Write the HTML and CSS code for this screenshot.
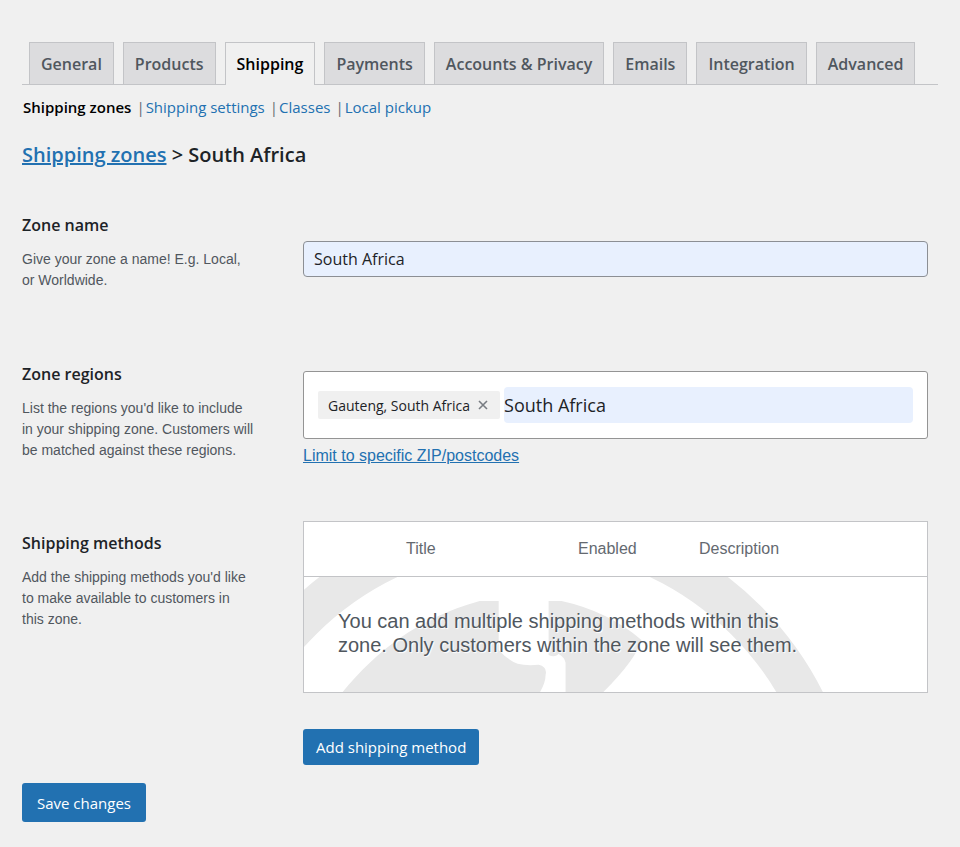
FILE: index.html
```html
<!DOCTYPE html>
<html lang="en">
<head>
    <meta charset="UTF-8">
    <title>Shipping zones - South Africa</title>
    <link rel="stylesheet" href="styles.css">
</head>
<body>
    <div class="wrap">
        <nav class="nav-tabs">
            <a href="#" class="nav-tab">General</a>
            <a href="#" class="nav-tab">Products</a>
            <a href="#" class="nav-tab active">Shipping</a>
            <a href="#" class="nav-tab">Payments</a>
            <a href="#" class="nav-tab">Accounts &amp; Privacy</a>
            <a href="#" class="nav-tab">Emails</a>
            <a href="#" class="nav-tab">Integration</a>
            <a href="#" class="nav-tab">Advanced</a>
        </nav>

        <ul class="subnav">
            <li><a href="#" class="current">Shipping zones</a></li>
            <li><a href="#">Shipping settings</a></li>
            <li><a href="#">Classes</a></li>
            <li><a href="#">Local pickup</a></li>
        </ul>

        <h2><a href="#">Shipping zones</a> &gt; South Africa</h2>

        <form onsubmit="return false">
            <!-- Zone name -->
            <div class="row row-name">
                <div class="row-label">
                    <label for="zoneName">Zone name</label>
                    <p>Give your zone a name! E.g. Local, or Worldwide.</p>
                </div>
                <div class="row-field">
                    <input type="text" id="zoneName" class="zone-name" value="South Africa">
                </div>
            </div>

            <!-- Zone regions -->
            <div class="row row-regions">
                <div class="row-label">
                    <label for="zoneRegions">Zone regions</label>
                    <p>List the regions you'd like to include in your shipping zone. Customers will be matched against these regions.</p>
                </div>
                <div class="row-field">
                    <div class="token-box">
                        <span class="token">
                            Gauteng, South Africa
                            <button type="button" class="token-remove" aria-label="Remove">
                                <svg width="10" height="10" viewBox="0 0 10 10"><path d="M1 1l8 8M9 1l-8 8" stroke="#787c82" stroke-width="1.6" fill="none"/></svg>
                            </button>
                        </span>
                        <input type="text" id="zoneRegions" class="token-input" value="South Africa">
                    </div>
                    <a href="#" class="postcodes">Limit to specific ZIP/postcodes</a>
                </div>
            </div>

            <!-- Shipping methods -->
            <div class="row row-methods">
                <div class="row-label">
                    <h3>Shipping methods</h3>
                    <p>Add the shipping methods you'd like to make available to customers in this zone.</p>
                </div>
                <div class="row-field">
                    <table class="methods">
                        <thead>
                            <tr>
                                <th class="col-sort"></th>
                                <th class="col-title">Title</th>
                                <th class="col-enabled">Enabled</th>
                                <th>Description</th>
                            </tr>
                        </thead>
                        <tbody>
                            <tr>
                                <td colspan="4" class="blank">
                                    <svg class="globe" viewBox="0 0 624 116" preserveAspectRatio="xMinYMin slice" aria-hidden="true">
                                        <circle cx="220" cy="266" r="315" fill="none" stroke="#e8e8e8" stroke-width="41"/>
                                        <path fill="#e8e8e8" d="M38 116C72 75 112 42 176 24H195V73Q204 83 214 87Q222 89 235 88Q244 90 242 98Q242 106 236 116Z"/>
                                        <path fill="#e8e8e8" d="M245 24H258Q304 34 338 63Q333 82 299 116H262V86Q261 80 255 77Q251 81 245 78Z"/>
                                    </svg>
                                    <p>You can add multiple shipping methods within this zone. Only customers within the zone will see them.</p>
                                </td>
                            </tr>
                        </tbody>
                    </table>
                    <button type="button" class="button add-method">Add shipping method</button>
                </div>
            </div>

            <button type="submit" class="button save">Save changes</button>
        </form>
    </div>
</body>
</html>
```
FILE: styles.css
```css
* {
    box-sizing: border-box;
}
body {
    margin: 0;
    background: #f0f0f0;
    color: #1d2327;
    font-family: "Open Sans", sans-serif;
    font-size: 15px;
}
a {
    color: #2271b1;
}
.wrap {
    padding: 42px 22px 24px;
}

/* Tabs */
.nav-tabs {
    display: flex;
    gap: 9px;
    padding-left: 7px;
    border-bottom: 1px solid #c3c4c7;
}
.nav-tab {
    height: 42px;
    padding: 0 11px;
    border: 1px solid #c3c4c7;
    border-bottom: none;
    background: #dcdcde;
    color: #50575e;
    font-size: 16px;
    font-weight: 600;
    line-height: 42px;
    text-decoration: none;
    white-space: nowrap;
}
.nav-tab.active {
    margin-bottom: -1px;
    height: 43px;
    background: #f0f0f0;
    color: #000;
}

.subnav {
    display: flex;
    margin: 12px 0 0;
    padding: 0 0 0 1px;
    list-style: none;
    line-height: 20px;
}
.subnav li + li::before {
    content: "|";
    margin-left: 5px;
    margin-right: 1px;
    color: #646970;
}
.subnav a {
    text-decoration: none;
}
.subnav .current {
    color: #000;
    font-weight: 600;
}

h2 {
    margin: 24px 0 0;
    font-size: 20px;
    font-weight: 600;
    line-height: 28px;
}

/* Form rows */
.row {
    display: grid;
    grid-template-columns: 240px 1fr;
    column-gap: 41px;
    padding-right: 10px;
}
.row-name {
    margin-top: 44px;
    min-height: 149px;
}
.row-regions {
    min-height: 149px;
}
.row-methods {
    margin-top: 10px;
}
.row-methods .row-label {
    padding-top: 10px;
}
.row-label label,
.row-label h3 {
    display: block;
    margin: 0;
    font-size: 16px;
    font-weight: 600;
    line-height: 24px;
}
.row-label p {
    max-width: 232px;
    margin: 12px 0 0;
    color: #50575e;
    font: 14px/21px "Liberation Sans", Arial, sans-serif;
}
.zone-name {
    width: 100%;
    height: 36px;
    margin-top: 28px;
    padding: 0 10px;
    border: 1px solid #8c8f94;
    border-radius: 4px;
    background: #e8f0fe;
    color: #1d2327;
    font: 16px "Open Sans", sans-serif;
}
.token-box {
    display: flex;
    align-items: center;
    gap: 4px;
    margin-top: 9px;
    padding: 15px 14px;
    border: 1px solid #949494;
    border-radius: 3px;
    background: #fff;
}
.token {
    display: flex;
    align-items: center;
    gap: 8px;
    height: 28px;
    padding: 0 12px 0 10px;
    border-radius: 2px;
    background: #f0f0f0;
    font-size: 14px;
    white-space: nowrap;
}
.token-remove {
    display: flex;
    padding: 0;
    border: none;
    background: none;
    cursor: pointer;
}
.token-input {
    flex: 1;
    min-width: 0;
    height: 36px;
    padding: 0;
    border: none;
    border-radius: 4px;
    background: #e8f0fe;
    color: #1d2327;
    font: 18px "Open Sans", sans-serif;
}
.postcodes {
    display: block;
    margin-top: 7px;
    font: 16px/20px "Liberation Sans", Arial, sans-serif;
}

/* Methods table */
.methods {
    width: 100%;
    border: 1px solid #c3c4c7;
    border-spacing: 0;
    background: #fff;
    font-family: "Liberation Sans", Arial, sans-serif;
}
.methods th {
    height: 55px;
    padding: 0;
    border-bottom: 1px solid #c3c4c7;
    color: #646970;
    font-size: 16px;
    font-weight: 400;
    text-align: left;
}
.methods .col-sort {
    width: 102px;
}
.methods .col-title {
    width: 172px;
}
.methods .col-enabled {
    width: 121px;
}
.methods .blank {
    position: relative;
    padding: 32px 34px 35px;
    overflow: hidden;
}
.globe {
    position: absolute;
    top: 0;
    left: 0;
    width: 100%;
    height: 100%;
}
.blank p {
    position: relative;
    max-width: 480px;
    margin: 0;
    color: #50575e;
    font-size: 20px;
    line-height: 24px;
    text-shadow: 1px 1px 1px #fff;
}

.button {
    height: 36px;
    padding: 0 13px;
    border: none;
    border-radius: 3px;
    background: #2271b1;
    color: #fff;
    font: 15px "Open Sans", sans-serif;
    cursor: pointer;
}
.add-method {
    margin-top: 36px;
}
.save {
    display: block;
    height: 39px;
    margin-top: 18px;
    padding: 0 15px;
}
```
